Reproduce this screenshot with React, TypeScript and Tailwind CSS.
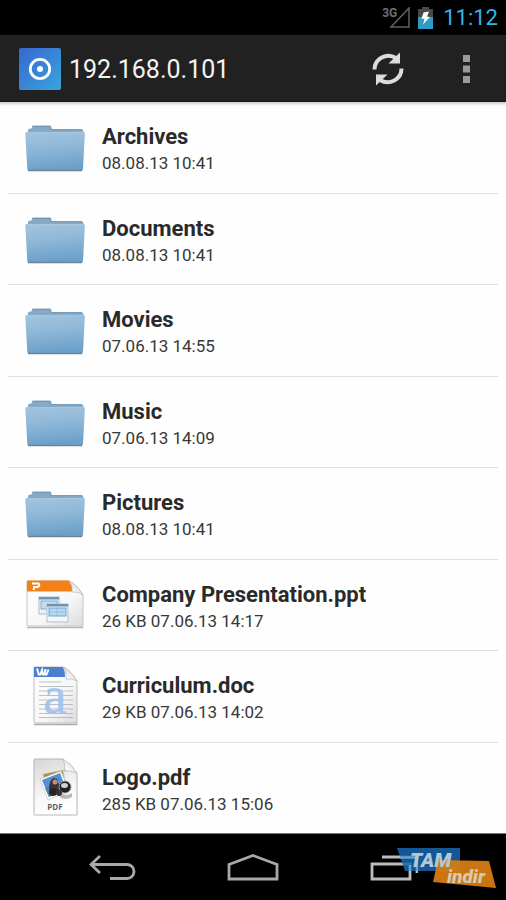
import type { ReactNode } from "react";

type FileKind = "folder" | "ppt" | "doc" | "pdf";

interface FileItem {
  name: string;
  details: string;
  kind: FileKind;
}

const files: FileItem[] = [
  { name: "Archives", details: "08.08.13 10:41", kind: "folder" },
  { name: "Documents", details: "08.08.13 10:41", kind: "folder" },
  { name: "Movies", details: "07.06.13 14:55", kind: "folder" },
  { name: "Music", details: "07.06.13 14:09", kind: "folder" },
  { name: "Pictures", details: "08.08.13 10:41", kind: "folder" },
  { name: "Company Presentation.ppt", details: "26 KB 07.06.13 14:17", kind: "ppt" },
  { name: "Curriculum.doc", details: "29 KB 07.06.13 14:02", kind: "doc" },
  { name: "Logo.pdf", details: "285 KB 07.06.13 15:06", kind: "pdf" },
];

// Gradients shared by all file icons
const IconDefs = () => (
  <svg width="0" height="0" className="absolute" aria-hidden="true">
    <defs>
      <linearGradient id="folderFront" x1="0" y1="0" x2="0.15" y2="1">
        <stop offset="0" stopColor="#a3c5df" />
        <stop offset="0.45" stopColor="#8fb8d8" />
        <stop offset="1" stopColor="#6da0c9" />
      </linearGradient>
      <linearGradient id="paper" x1="0" y1="0" x2="1" y2="1">
        <stop offset="0" stopColor="#ffffff" />
        <stop offset="0.6" stopColor="#f6f6f6" />
        <stop offset="1" stopColor="#dcdcdc" />
      </linearGradient>
      <linearGradient id="grayPaper" x1="0" y1="0" x2="0.3" y2="1">
        <stop offset="0" stopColor="#d6d6d6" />
        <stop offset="0.7" stopColor="#f8f8f8" />
        <stop offset="1" stopColor="#ffffff" />
      </linearGradient>
      <linearGradient id="curl" x1="0" y1="1" x2="0.7" y2="0.3">
        <stop offset="0" stopColor="#8e8e8e" />
        <stop offset="0.4" stopColor="#ffffff" />
        <stop offset="1" stopColor="#d6d6d6" />
      </linearGradient>
      <linearGradient id="appTile" x1="0" y1="0" x2="1" y2="1">
        <stop offset="0" stopColor="#3767d2" />
        <stop offset="1" stopColor="#39a5da" />
      </linearGradient>
    </defs>
  </svg>
);

const FolderIcon = () => (
  <>
    <path d="M3 14V12.500l2-1h1.500l.6-2Q7.300 8.500 8 8.500H25q1 0 1.200 1l.6 2.500H57l1.500 2V20H3z" fill="#86aac6" />
    <path d="M7.500 9.500H25l.8 3.200H57" fill="none" stroke="#6c93b2" strokeWidth="0.800" />
    <path d="M1.500 15H58.500q1.500 0 1.400 1.500L58 52Q57.900 53.500 56.500 53.500H3.800q-1.400 0-1.500-1.500L.3 16.500q0-1.500 1.200-1.500z" fill="url(#folderFront)" />
    <path d="M1 15.500H59" stroke="#a9c6dc" />
    <path d="M3 53.500H57" stroke="#6c8396" strokeWidth="1.500" />
  </>
);

const PptIcon = () => (
  <>
    <path d="M2 52.500H58.500" stroke="#b5b5b5" strokeWidth="1.500" />
    <path d="M3 6H44Q50 9 58 20V51H3q-1 0-1-1V7q0-1 1-1z" fill="url(#paper)" stroke="#c4c4c4" />
    <path d="M3 5.500H44q3 5 4 11H2V6.500q0-1 1-1z" fill="#f28119" />
    <path d="M8.500 15L9.500 11M7 8.500H13.500q2 2-1 3.500H9.500" fill="none" stroke="#fff" strokeWidth="2" />
    <path d="M43.500 6Q51 8 58 20q-5-4-11-3Q48 10 43.500 6z" fill="url(#curl)" stroke="#aaa" strokeWidth="0.600" />
    <rect x="14" y="22" width="20" height="17" fill="#eef2f5" stroke="#aebdca" />
    <rect x="14" y="22" width="20" height="2.500" fill="#7195b6" />
    <rect x="16" y="26" width="16" height="8" fill="#c2dcf0" stroke="#80aed2" />
    <rect x="22" y="29" width="21" height="18" fill="#f4f6f8" stroke="#b3bfc9" />
    <rect x="22" y="29" width="21" height="2.500" fill="#6f91b2" />
    <rect x="24" y="33" width="17" height="8" fill="#b4d9f3" stroke="#73a4cc" />
    <path d="M24 37h17M32 33v8" stroke="#86b6da" strokeWidth="0.600" />
  </>
);

const DocIcon = () => (
  <>
    <path d="M9 58.500H52.500" stroke="#aaa" strokeWidth="1.500" />
    <path d="M10 1H38Q45 4 52 15V57H10q-1 0-1-1V2q0-1 1-1z" fill="url(#paper)" stroke="#bdbdbd" />
    <path d="M10 1H38q2 4 2 10H9V2q0-1 1-1z" fill="#4b7fd2" />
    <path d="M12 2.500l1.800 6h1.500L17 4l.8 4.500h1.500L20.500 3M19.500 8.500h2L23.500 3.500" fill="none" stroke="#fff" strokeWidth="2" />
    <path
      d="M14 16h22M14 20.500h34M14 25h34M14 29.500h34M14 34h34M14 38.500h34M14 43h34M14 47.500h34M14 51.500h34"
      stroke="#9aa3b0"
      strokeOpacity="0.650"
    />
    <text x="30" y="47" textAnchor="middle" fontFamily="Liberation Serif, serif" fontSize="52" fill="#9fc0f0" fillOpacity="0.900" stroke="#9fc0f0" strokeOpacity="0.600">a</text>
    <path d="M37.500 1Q45 3 52 15q-5-3-11-2Q42 5 37.500 1z" fill="url(#curl)" stroke="#aaa" strokeWidth="0.600" />
  </>
);

const PdfIcon = () => (
  <>
    <path d="M10 1H38L52 15V57H10q-1 0-1-1V2q0-1 1-1z" fill="url(#grayPaper)" stroke="#b5b5b5" />
    <path d="M38 1Q41 7 39 13q7-1 13 2Q46 5 38 1z" fill="url(#curl)" stroke="#aaa" strokeWidth="0.600" />
    <path d="M18 16L38 12l2 12-20 6z" fill="#a58b50" stroke="#d8c9a0" />
    <path d="M15 21L36 13l8 20-21 9z" fill="#fff" stroke="#bbb" strokeWidth="0.600" />
    <path d="M17 22L35 15l6 16-17 8z" fill="#568fd4" />
    <path d="M20 30l9-5 12 5-17 9z" fill="#5a81a8" />
    <path d="M25 24l3-4 4 1 1 4 5 6-11 6-3-7z" fill="#38333a" />
    <circle cx="30" cy="24" r="2.500" fill="#c98f6a" />
    <circle cx="28" cy="34" r="4" fill="#26262a" />
    <path d="M33 32q6 8 14 3v4q-7 4-12 0z" fill="#b8b8b8" />
    <ellipse cx="40" cy="29" rx="6" ry="6" fill="#222" stroke="#999" />
    <ellipse cx="39.500" cy="27.500" rx="3.500" ry="2.500" fill="#cfd3d6" />
    <circle cx="34" cy="35" r="3" fill="#343434" />
    <text x="30" y="52" textAnchor="middle" fontFamily="Open Sans, sans-serif" fontSize="8" fontWeight="700" fill="#606060">PDF</text>
  </>
);

const icons: Record<FileKind, ReactNode> = {
  folder: <FolderIcon />,
  ppt: <PptIcon />,
  doc: <DocIcon />,
  pdf: <PdfIcon />,
};

const FileRow = ({ name, details, kind }: FileItem) => (
  <li className="flex flex-1 border-b border-[#dedede] last:border-b-0">
    <button type="button" className="flex w-full items-center gap-4 px-4 text-left">
      <svg width="62" height="60" viewBox="-1 0 62 60" className="shrink-0 overflow-visible" aria-hidden="true">
        {icons[kind]}
      </svg>
      <span className="flex min-w-0 flex-col pt-1">
        <span className="truncate text-[22px] leading-7 font-bold text-[#2a2a2a]">{name}</span>
        <span className="text-[17px] leading-6 text-[#383838]">{details}</span>
      </span>
    </button>
  </li>
);

const StatusBar = () => (
  <div className="flex h-[35px] shrink-0 items-center justify-end gap-2 bg-black pr-2">
    <div className="flex items-start">
      <span className="-mr-2 text-xs leading-3 font-bold text-[#707070]">3G</span>
      <svg width="21" height="22" viewBox="0 0 21 22" aria-label="Signal">
        <path d="M20 1V20H2z" fill="none" stroke="#606060" strokeWidth="1.500" />
      </svg>
    </div>
    <svg width="15" height="22" viewBox="0 0 15 22" aria-label="Battery charging">
      <path d="M4 0h7v2h4v20H0V2h4z" fill="#484848" />
      <path d="M0 10h15v12H0z" fill="#2d9bc4" />
      <path d="M5.500 5.500L11 4.500 9 9.500l3 .5-7 7.500L6.500 12 3.500 11.500z" fill="#fff" />
    </svg>
    <time className="ml-0.5 text-[22px] leading-7 text-[#33b5e5]">11:12</time>
  </div>
);

const AppBar = () => (
  <header className="flex h-[67px] shrink-0 items-center border-b border-[#151515] bg-[#212121] pt-0.5 pl-[19px]">
    <svg width="42" height="42" viewBox="0 0 42 42" aria-hidden="true">
      <rect width="42" height="42" rx="2" fill="url(#appTile)" />
      <circle cx="21" cy="21" r="9.700" fill="none" stroke="#fff" strokeWidth="2.800" />
      <circle cx="21" cy="21" r="3" fill="#fff" />
    </svg>
    <h1 className="ml-2 flex-1 pt-0.5 text-[25px] leading-8 text-[#f3f3f3]">192.168.0.101</h1>
    <button type="button" aria-label="Refresh" className="flex h-full w-[78px] items-center justify-center">
      <svg width="34" height="36" viewBox="0 0 34 36">
        <g fill="none" stroke="#dcdcdc" strokeWidth="4">
          <path d="M3.500 18.500A14 13.500 0 0 1 25 7" />
          <path d="M30.500 17.500A14 13.500 0 0 1 9 29" />
        </g>
        <path d="M29 1.500V12.500H17.500z M5 34.500V23.500H16.500z" fill="#dcdcdc" />
      </svg>
    </button>
    <button type="button" aria-label="More options" className="flex h-full w-[79px] items-center justify-center">
      <svg width="8" height="28" viewBox="0 0 8 28" fill="#9a9a9a">
        <path d="M0 0h7v7H0zM0 10.500h7v7H0zM0 21h7v7H0z" />
      </svg>
    </button>
  </header>
);

const NavBar = () => (
  <nav className="relative grid h-[67px] shrink-0 grid-cols-3 border-t border-[#777] bg-black px-[42px]">
    <button type="button" aria-label="Back" className="flex items-center justify-center">
      <svg width="48" height="30" viewBox="0 0 48 30" fill="none" stroke="#a8a8a8" strokeWidth="2.800">
        <path d="M12 4L3 12.500L12 21M3 12.500H39A7 7 0 0 1 39 26.500H22" />
      </svg>
    </button>
    <button type="button" aria-label="Home" className="flex items-center justify-center">
      <svg width="52" height="28" viewBox="0 0 52 28" fill="none" stroke="#a8a8a8" strokeWidth="2.800">
        <path d="M2 11.500L26 2.500L50 11.500V26H2z" />
      </svg>
    </button>
    <button type="button" aria-label="Recent apps" className="flex items-center justify-center">
      <svg width="48" height="28" viewBox="0 0 48 28" fill="none" stroke="#bcbcbc" strokeWidth="2.800">
        <path d="M2 11H40V26H2zM12 4H47V20" />
      </svg>
    </button>
    <svg width="110" height="44" viewBox="396 846 110 44" className="absolute right-0 bottom-2.5" aria-label="TAM indir">
      <path d="M397 848H460V871H405z" fill="#1667ae" fillOpacity="0.850" />
      <path d="M438 860L489 861L496 888L433 882z" fill="#d47c12" fillOpacity="0.950" />
      <path d="M400 857.500H417V871M410 865V871" fill="none" stroke="#a9c8e2" strokeWidth="2.500" strokeOpacity="0.500" />
      <text x="410" y="867" fontFamily="Roboto, sans-serif" fontSize="20" fontStyle="italic" fontWeight="900" fill="#b5c8d8">TAM</text>
      <text x="447" y="883" fontFamily="Roboto, sans-serif" fontSize="19" fontStyle="italic" fontWeight="900" fill="#d8c8ae">indir</text>
    </svg>
  </nav>
);

const App = () => (
  <div className="flex min-h-screen flex-col bg-[#fefefe] font-[Roboto,sans-serif]">
    <IconDefs />
    <StatusBar />
    <AppBar />
    <main className="flex flex-1 flex-col px-2 shadow-[inset_0_7px_3px_-5px_#cfcfcf]">
      <ul className="flex flex-1 flex-col">
        {files.map((file) => (
          <FileRow key={file.name} {...file} />
        ))}
      </ul>
    </main>
    <NavBar />
  </div>
);

export default App;
